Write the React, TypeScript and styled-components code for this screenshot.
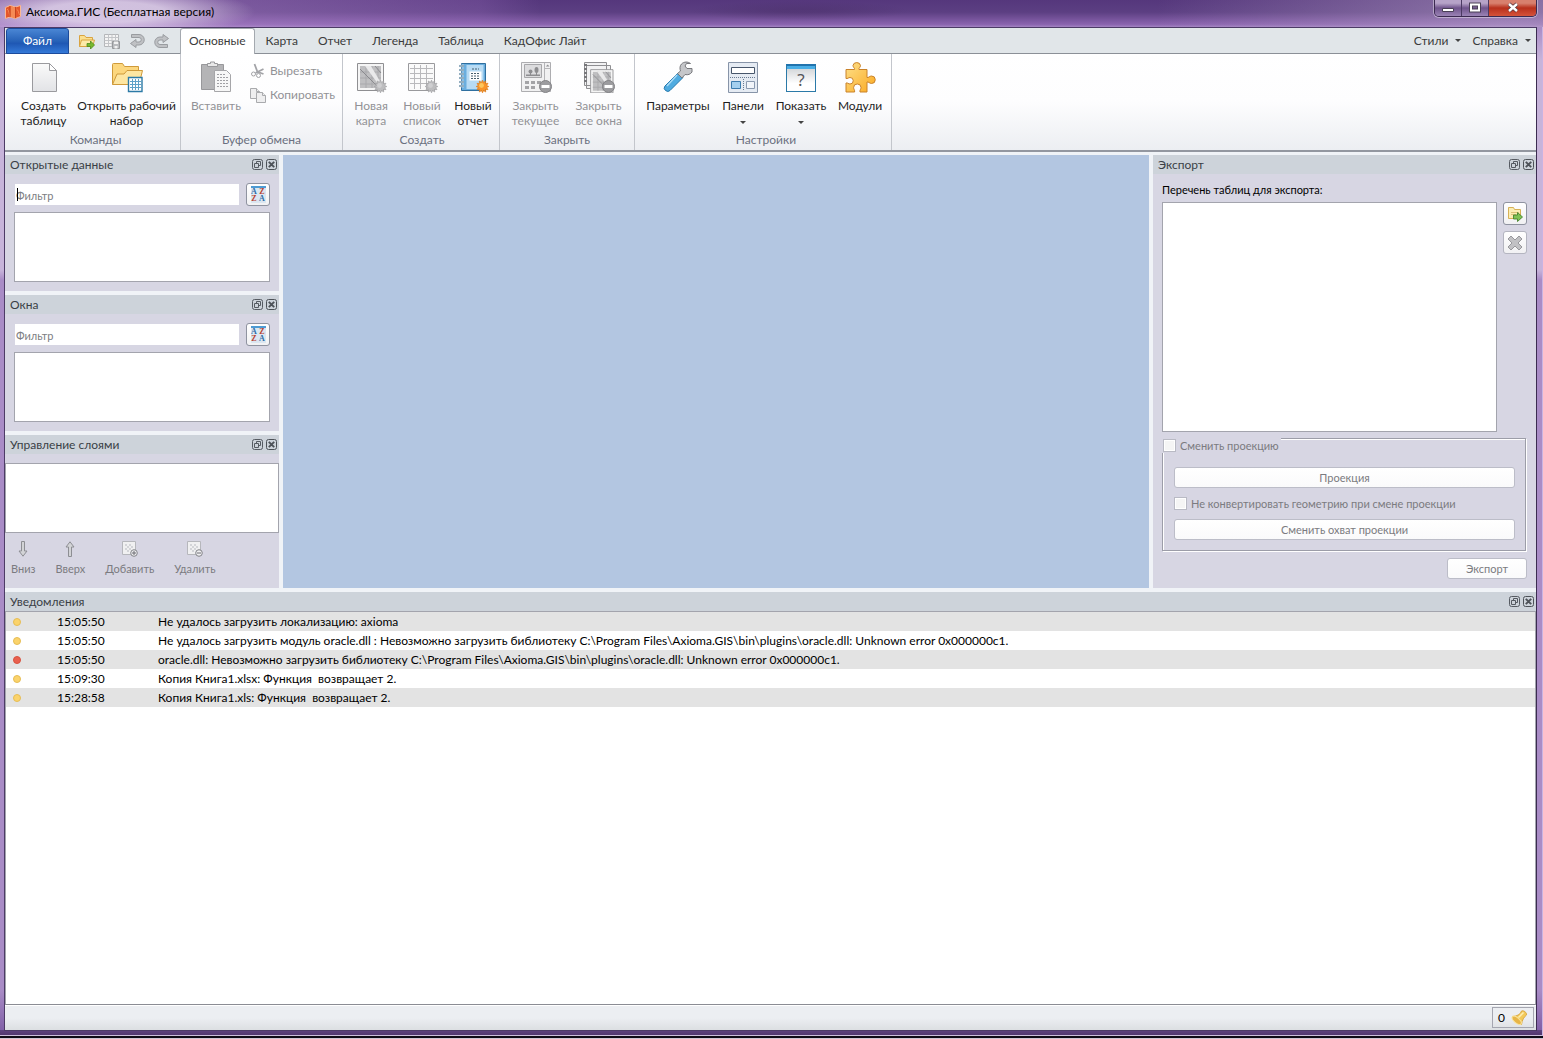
import React from 'react';
import styled, { createGlobalStyle } from 'styled-components';

const UI = 'Lato, "Noto Sans", sans-serif';

const Global = createGlobalStyle`
  * { box-sizing: border-box; }
  html, body, #root { height: 100%; }
  body { margin: 0; background: #2b1d3d; font: 12px/16px ${UI}; color: #1e1e1e; overflow: hidden; }
  button, input { font: inherit; color: inherit; margin: 0; }
  button { padding: 0; border: 0; background: none; }
  svg { display: block; flex: none; }
`;

const Desktop = styled.div`
  height: 100vh;
  display: flex;
  flex-direction: column;
  border-bottom: 1px solid #cfc3d2;
  background: #0f0a15;
  padding-bottom: 2px;
`;

const Frame = styled.main`
  flex: 1;
  min-height: 0;
  display: flex;
  flex-direction: column;
  padding: 0 5px 4px 4px;
  border-right: 1px solid #c9b4e2;
  border-bottom: 1px solid #cdbfdc;
  background:
    linear-gradient(#5f4380, #52366e) bottom / 100% 5px no-repeat,
    linear-gradient(180deg, transparent 0 27px, rgba(255,255,255,.35) 60px 270px, transparent 280px),
    linear-gradient(180deg, #a98cc6 0 990px, #7d5ba4 100%);
`;

const TitleBar = styled.header`
  height: 27px;
  margin: 0 -6px 0 -4px;
  padding: 0 6px 0 5px;
  display: flex;
  align-items: flex-start;
  background:
    radial-gradient(ellipse 150px 26px at 105px 12px, rgba(235,225,242,.75) 40%, transparent 100%),
    radial-gradient(ellipse 110px 10px at 800px 11px, rgba(60,35,85,.25) 20%, transparent 100%),
    linear-gradient(90deg, rgba(190,150,215,.5) 0, rgba(160,115,195,.25) 480px, transparent 540px, transparent 75%, rgba(190,170,205,.5) 97%),
    linear-gradient(180deg, #55377c 0, #5c3f82 45%, #8a63ae 90%, #a383c2 100%);
`;

const AppName = styled.h1`
  margin: 0;
  padding: 4px 0 0 5px;
  flex: 1;
  font-size: 12px;
  font-weight: 400;
  line-height: 16px;
  color: #000;
`;

const LogoWrap = styled.span`
  padding-top: 4px;
`;

const Caption = styled.div`
  display: flex;
  height: 17px;
  border: 1px solid #3b2a50;
  border-top: 0;
  border-radius: 0 0 5px 5px;
  overflow: hidden;
  box-shadow: 0 0 0 1px rgba(255,255,255,.4);
`;

const CaptionButton = styled.button<{ $close?: boolean }>`
  width: ${p => (p.$close ? 47 : 27)}px;
  display: flex;
  align-items: center;
  justify-content: center;
  border-right: 1px solid #4b3a63;
  background: ${p => p.$close
    ? 'linear-gradient(#d8806e 0 20%, #b8301c 50%, #d5533a)'
    : 'linear-gradient(#b6a3c8 0 20%, #6f548c 50%, #9b83b5)'};
  &:last-child { border-right: 0; }
`;

const Client = styled.div`
  flex: 1;
  min-height: 0;
  display: flex;
  flex-direction: column;
  border: 1px solid #4d3b66;
  border-right-color: #3b2c50;
  background: #f0f3f7;
`;

const TabRow = styled.nav`
  height: 26px;
  display: flex;
  align-items: stretch;
  background: #e1e6e9;
  border-bottom: 1px solid #8b9097;
`;

const FileButton = styled.button`
  width: 63px;
  margin-left: 1px;
  margin-bottom: -1px;
  color: #fff;
  border: 1px solid #1c4b9c;
  border-radius: 3px 3px 0 0;
  background: linear-gradient(#4a86d4, #2762b8 50%, #1f58b4 60%, #3479d8);
`;

const QuickAccess = styled.div`
  display: flex;
  align-items: center;
  gap: 9px;
  padding: 0 10px;
`;

const Tab = styled.button<{ $active?: boolean }>`
  padding: 0 ${p => (p.$active ? 8 : 9)}px 2px;
  margin: 0 ${p => (p.$active ? 1 : 0)}px -1px 0;
  color: #3b3b3b;
  white-space: nowrap;
  border: 1px solid ${p => (p.$active ? '#a4a9af' : 'transparent')};
  border-bottom: 0;
  border-radius: 3px 3px 0 0;
  background: ${p => (p.$active ? '#fff' : 'transparent')};
`;

const Spacer = styled.div`
  flex: 1;
`;

const MenuButton = styled.button`
  display: flex;
  align-items: center;
  gap: 7px;
  padding: 0 5px 0 6px;
  color: #3b3b3b;
`;

const Arrow = styled.span`
  border: 3px solid transparent;
  border-top-color: #444;
  border-bottom: 0;
`;

const DropArrow = styled(Arrow)`
  margin-top: 3px;
`;

const Ribbon = styled.section`
  height: 98px;
  display: flex;
  background: linear-gradient(#ffffff 0, #fdfdfe 50%, #eceef2 100%);
  border-bottom: 2px solid #9397a0;
`;

const Group = styled.div<{ $w: number; $pad?: number }>`
  width: ${p => p.$w}px;
  display: flex;
  flex-direction: column;
  border-right: 1px solid #c3c6cc;
  padding: 7px 0 1px ${p => p.$pad ?? 0}px;
`;

const GroupItems = styled.div`
  flex: 1;
  display: flex;
  justify-content: center;
  align-items: flex-start;
`;

const GroupLabel = styled.div`
  text-align: center;
  color: #6b7080;
  line-height: 18px;
`;

const BigButton = styled.button<{ $w: number }>`
  width: ${p => p.$w}px;
  display: flex;
  flex-direction: column;
  align-items: center;
  gap: 5px;
  line-height: 15px;
  white-space: pre;
  color: #1e1e1e;
  &:disabled { color: #929296; }
`;

const Stack = styled.div`
  display: flex;
  flex-direction: column;
  gap: 8px;
  padding: 2px 0 0 6px;
`;

const SmallButton = styled.button`
  display: flex;
  align-items: center;
  gap: 4px;
  &:disabled { color: #929296; }
`;

const Workspace = styled.div`
  height: 433px;
  margin-top: 3px;
  display: grid;
  grid-template-columns: 274px 1fr 383px;
  gap: 4px;
`;

const Column = styled.div`
  display: flex;
  flex-direction: column;
  gap: 4px;
`;

const Panel = styled.section<{ $fill?: boolean }>`
  display: flex;
  flex-direction: column;
  flex: ${p => (p.$fill ? 1 : 'none')};
  min-height: 0;
  background: #d7d6e3;
`;

const PanelTitle = styled.header`
  height: 19px;
  padding: 0 2px 0 5px;
  display: flex;
  align-items: center;
  gap: 3px;
  background: #cdd3da;
`;

const PanelName = styled.h2`
  margin: 0;
  flex: 1;
  font-size: 12px;
  font-weight: 400;
  line-height: 19px;
  color: #3a3f46;
`;

const PanelTool = styled.button`
  width: 11px;
  height: 11px;
`;

const Canvas = styled.section`
  background: #b3c6e1;
`;

const FilterBody = styled.div`
  display: flex;
  flex-direction: column;
  gap: 6px;
  padding: 9px 9px;
`;

const FilterRow = styled.div`
  display: flex;
  align-items: center;
  gap: 7px;
`;

const FilterField = styled.label`
  flex: 1;
  position: relative;
  display: flex;
  padding-left: 1px;
`;

const FilterInput = styled.input`
  width: 100%;
  height: 21px;
  padding: 1px 1px 0;
  border: 0;
  border-radius: 0;
  outline: 0;
  font-size: 11px;
  background: #fff;
  &::placeholder { color: #7d7d82; opacity: 1; }
`;

const Caret = styled.i`
  position: absolute;
  left: 3px;
  top: 4px;
  width: 1px;
  height: 13px;
  background: #000;
`;

const ToolButton = styled.button`
  width: 24px;
  height: 23px;
  display: flex;
  align-items: center;
  justify-content: center;
  border: 1px solid #8f93a0;
  border-radius: 3px;
  background: linear-gradient(#fff, #f1f1f3);
  &:disabled { border-color: #b4b5c0; }
`;

const ListBox = styled.div<{ $h: number }>`
  height: ${p => p.$h}px;
  background: #fff;
  border: 1px solid #a3a4ad;
`;

const LayerBody = styled.div`
  padding-top: 9px;
`;

const LayerTools = styled.div`
  display: flex;
  gap: 20px;
  padding: 8px 6px;
  font-size: 11px;
`;

const LayerButton = styled.button`
  display: flex;
  flex-direction: column;
  align-items: center;
  gap: 4px;
  &:disabled { color: #7b7b80; }
`;

const ExportBody = styled.div`
  padding: 8px 9px 0;
  font-size: 11px;
`;

const ExportLabel = styled.div`
  line-height: 16px;
  margin-bottom: 4px;
  color: #000;
`;

const ExportRow = styled.div`
  display: grid;
  grid-template-columns: 1fr 24px;
  gap: 6px;
`;

const ButtonColumn = styled.div`
  display: flex;
  flex-direction: column;
  gap: 6px;
`;

const ProjectionGroup = styled.div`
  display: flex;
  flex-direction: column;
  margin: 6px 1px 0 0;
  padding: 0 10px 10px 11px;
  border: 1px solid #9c9da8;
  box-shadow: 1px 1px 0 #fff, inset 1px 1px 0 #fff;
`;

const Check = styled.label`
  display: flex;
  align-items: center;
  gap: 4px;
  height: 15px;
  color: #7b7b80;
  white-space: nowrap;
`;

const GroupCheck = styled(Check)`
  align-self: flex-start;
  margin: -1px 0 14px -12px;
  padding: 0 2px 0 1px;
  background: #d7d6e3;
`;

const CheckBox = styled.input.attrs({ type: 'checkbox' })`
  appearance: none;
  width: 13px;
  height: 13px;
  border: 1px solid #b9bac4;
  background: #f5f5f5;
  box-shadow: inset 0 0 0 1px #fff;
`;

const PushButton = styled.button<{ $w?: number }>`
  height: 21px;
  width: ${p => (p.$w ? `${p.$w}px` : 'auto')};
  border: 1px solid #bcbdc8;
  border-radius: 3px;
  background: linear-gradient(#fff, #fafafb);
  &:disabled { color: #7b7b80; }
`;

const ProjectionOptions = styled.div`
  display: flex;
  flex-direction: column;
  gap: 8px;
`;

const ExportActions = styled.div`
  display: flex;
  justify-content: flex-end;
  margin-top: 7px;
`;

const LogPanel = styled(Panel)`
  margin-top: 4px;
`;

const LogArea = styled.div`
  flex: 1;
  min-height: 0;
  background: #fff;
  border: 1px solid #a3a4ad;
  border-bottom-color: #8b8c94;
`;

const LogTable = styled.table`
  width: 100%;
  table-layout: fixed;
  border-collapse: collapse;
  color: #000;
`;

const LogRow = styled.tr`
  height: 19px;
  &:nth-child(odd) { background: #e3e3e3; }
`;

const LogCell = styled.td<{ $w?: number }>`
  width: ${p => (p.$w ? `${p.$w}px` : 'auto')};
  padding: 0;
  line-height: 19px;
  white-space: pre;
`;

const Dot = styled.span<{ $error?: boolean }>`
  display: block;
  width: 8px;
  height: 8px;
  margin-left: 7px;
  border-radius: 50%;
  border: 1px solid ${p => (p.$error ? '#d8523f' : '#e6bd55')};
  background: ${p => (p.$error ? '#e9604e' : '#fbd36b')};
`;

const StatusBar = styled.footer`
  height: 25px;
  display: flex;
  justify-content: flex-end;
  padding: 1px 2px 2px 0;
  border-top: 1px solid #fff;
  background: linear-gradient(#eceef2 0 50%, #dcdfe2);
`;

const StatusCell = styled.div`
  display: flex;
  align-items: center;
  gap: 6px;
  padding: 0 5px;
  border: 1px solid #a5a6b0;
  color: #000;
`;

/* ---------- icons ---------- */

const Logo = () => (
  <svg width="16" height="16" viewBox="0 0 16 16">
    <path d="M.5 3.500 5 1.500l5.500 1.500 5-1.500v11l-5 2-5.500-1.500-4.500 1.500z" fill="#e5562a" stroke="#fbb992" />
    <path d="M5.500 2v11l5 1.500V3.500z" fill="#f58a55" />
    <path d="M2 5c2 1 2 5 3 7M11.500 5c2 1 2 4 3 6" stroke="#f58a55" fill="none" />
    <path d="M5 2v11M10.500 3v11" stroke="#b93a17" strokeWidth=".8" />
  </svg>
);

const FolderArrow = () => (
  <svg width="16" height="16" viewBox="0 0 16 16">
    <path d="M.5 13.500v-11h5l1.500 2h6.500v9z" fill="#fbe08f" stroke="#d9a441" />
    <path d="M.5 13.500 2.500 7h13l-2 6.500z" fill="#fdeaa8" stroke="#d9a441" />
    <path d="M8 10.500h3.500v-2.500l4 4-4 4v-2.500h-3.500z" fill="#76b82e" stroke="#4c8a1b" strokeWidth=".8" />
  </svg>
);

const TableSave = () => (
  <svg width="16" height="16" viewBox="0 0 16 16">
    <path d="M.5 1.500h14v12h-14z" fill="#f4f4f4" stroke="#b4b6b9" />
    <path d="M.5 4.500h14M.5 7.500h14M.5 10.500h14M4.500 1.500v12M8 1.500v12M11.500 1.500v12" stroke="#c3c5c8" />
    <path d="M8.500 8.500h7v7h-7z" fill="#b9bbbe" stroke="#96989b" />
    <path d="M10 8.500h4v2.500h-4zM10.500 13h3v2.500h-3z" fill="#f1f1f1" />
  </svg>
);

/* The loop opens to the left; redo mirrors it and puts the arrow head on top. */
const Undo = ({ redo }: { redo?: boolean }) => (
  <svg width="16" height="16" viewBox="0 0 16 16">
    <g transform={redo ? 'rotate(180 8 8)' : undefined}>
      <path
        d="M2.500 1.500H10a5 5 0 0 1 0 10.500H7v2.500L1.500 10.500l5.500-4v2.500h3a2 2 0 0 0 0-4.500H2.500z"
        fill="#bfc1c4" stroke="#999ca0"
      />
    </g>
  </svg>
);

const NewPage = () => (
  <svg width="32" height="32" viewBox="0 0 32 32">
    <defs>
      <linearGradient id="page" x1="0" y1="0" x2="0" y2="1"><stop stopColor="#fafafa" /><stop offset="1" stopColor="#e2e3e6" /></linearGradient>
    </defs>
    <path d="M4.500 2.500h17l7 7v21h-24z" fill="url(#page)" stroke="#9a9a9e" />
    <path d="M21.500 2.500v7h7z" fill="#fff" stroke="#9a9a9e" />
  </svg>
);

const OpenFolder = () => (
  <svg width="32" height="32" viewBox="0 0 32 32">
    <path d="M1.500 23.500V3.500q0-1 1-1h9l2 3h14v5" fill="#fcd77e" stroke="#cf9a3a" />
    <path d="M1.500 23.500 6 13h7l3-3.500h15.500L28 23.500z" fill="#fde6a2" stroke="#cf9a3a" />
    <path d="M17.500 16.500h13.500v14h-13.500z" fill="#fff" stroke="#2c7aa6" strokeWidth="1.400" />
    <path d="M19 20.500h11M19 23.500h11M19 26.500h11M21.500 18v11M24.500 18v11M27.500 18v11" stroke="#5fa2c8" />
  </svg>
);

const Paste = () => (
  <svg width="32" height="32" viewBox="0 0 32 32">
    <path d="M1.500 3.500h22v25h-22z" fill="#b4b4b6" stroke="#98989b" />
    <path d="M7.500 5.500v-3h3v-1.500h4v1.500h3v3z" fill="#e8e8e8" stroke="#98989b" />
    <path d="M14.500 9.500h12l4 4v17h-16z" fill="#f7f7f7" stroke="#a6a6a9" />
    <path d="M17 13.500h8M17 16.500h11M17 19.500h11M17 22.500h11M17 25.500h11" stroke="#a0a0a4" strokeDasharray="2 1" />
  </svg>
);

const Cut = () => (
  <svg width="16" height="16" viewBox="0 0 16 16" fill="none" stroke="#a2a3a7">
    <path d="M4.500 1 7.500 9" strokeWidth="1.800" /><path d="m13.500 6-8 4M8 9l5.500 2" strokeWidth="1.800" />
    <circle cx="3.500" cy="11" r="2" /><circle cx="8.500" cy="12.500" r="2" />
  </svg>
);

const Copy = () => (
  <svg width="16" height="16" viewBox="0 0 16 16" fill="#eeeeef" stroke="#a9aaad">
    <path d="M.5 1.500h6l3 3v7h-9z" /><path d="M6.500 1.500v3h3" />
    <path d="M6.500 5.500h6l3 3v7h-9z" /><path d="M12.500 5.500v3h3" />
  </svg>
);

const burstPoints = Array.from({ length: 24 }, (_, i) => {
  const a = (i * Math.PI) / 12;
  const r = i % 2 ? 4.2 : 6.3;
  return `${(25.5 + r * Math.cos(a)).toFixed(1)},${(25.5 + r * Math.sin(a)).toFixed(1)}`;
}).join(' ');

const Burst = ({ color, edge, light }: { color: string; edge: string; light: string }) => (
  <>
    <polygon points={burstPoints} fill={color} stroke={edge} strokeWidth=".7" />
    <circle cx="24.500" cy="24.500" r="2.400" fill={light} />
  </>
);

const GreyBurst = () => <Burst color="#bdbdbf" edge="#a0a0a3" light="#cfcfd1" />;

const MapShape = () => (
  <>
    <path d="M2.500 2.500h26v27h-26z" fill="#f5f5f5" stroke="#8f8f92" />
    <path d="M5 5h21v22H5z" fill="#bfbfc1" />
    <path d="M5 11h21M5 17h21M5 23h21M11 5v22M17 5v22M23 5v22" stroke="#a9a9ac" />
    <path d="M10 5h6l10 17v5z" fill="#e9e9ea" /><path d="m20 5 6 7M5 8l19 19" stroke="#8a8a8e" />
  </>
);

const NewMap = () => (
  <svg width="32" height="32" viewBox="0 0 32 32"><MapShape /><GreyBurst /></svg>
);

const NewList = () => (
  <svg width="32" height="32" viewBox="0 0 32 32">
    <path d="M2.500 2.500h26v27h-26z" fill="#fafafa" stroke="#9a9a9d" />
    <path d="M4 7.500h23M4 12.500h23M4 17.500h23M4 22.500h23M8.500 4v24M14.500 4v24M20.500 4v24" stroke="#b9b9bc" />
    <GreyBurst />
  </svg>
);

const NewReport = () => (
  <svg width="32" height="32" viewBox="0 0 32 32">
    <path d="M4.500 2.500h24v27h-24z" fill="#6aaede" stroke="#2f6f9f" />
    <path d="M9.500 4h17v24h-17z" fill="#b7dbf4" />
    <path d="M12.500 10.500h12v9h-12z" fill="#fff" />
    <path d="M15 8h7M14 12.500h9M14 15h9M14 17.500h9" stroke="#49606e" strokeDasharray="2 1" />
    <path d="M2 5h5M2 9h5M2 13h5M2 17h5M2 21h5M2 25h5" stroke="#e9f2f8" strokeWidth="2.400" />
    <path d="M2 5h5M2 9h5M2 13h5M2 17h5M2 21h5M2 25h5" stroke="#3f6a88" />
    <Burst color="#f9952a" edge="#dd7a18" light="#fdc65c" />
  </svg>
);

const Minus = () => (
  <>
    <circle cx="25.500" cy="25.500" r="6" fill="#9c9c9f" stroke="#828285" />
    <path d="M21.500 24h8v3h-8z" fill="#fff" />
  </>
);

const CloseCurrent = () => (
  <svg width="32" height="32" viewBox="0 0 32 32">
    <path d="M1.500 1.500h29v29h-29z" fill="#f1f1f2" stroke="#adadb0" />
    <path d="M4.500 3.500h17v13h-17z" fill="#dcdcde" stroke="#a7a7aa" />
    <path d="M6 15h14v-1.500H6z" fill="#8d8d90" />
    <path d="M10.500 9v5M16.500 8v6" stroke="#8d8d90" />
    <ellipse cx="10.500" cy="10.500" rx="2" ry="2" fill="#8d8d90" /><ellipse cx="16.500" cy="9" rx="2" ry="3" fill="#8d8d90" />
    <path d="M24.500 2v28M25 7.500h6" stroke="#b5b5b8" /><path d="m27.700 3.500 1.800 2h-3.600z" fill="#909093" />
    <path d="M5 20h4v3H5zM11 20h4v3h-4zM17 20h4v3h-4zM5 25h4v3H5zM11 25h4v3h-4z" fill="#a3a3a6" />
    <Minus />
  </svg>
);

const CloseAll = () => (
  <svg width="32" height="32" viewBox="0 0 32 32">
    <g fill="#f2f2f3" stroke="#8e8e91"><path d="M1.500 1.500h22v23h-22zM3.500 4.500h24v23h-24z" /></g>
    <g transform="translate(5.500 6.500) scale(.86)"><MapShape /></g>
    <path d="M1 4h3M1 8h3M1 12h3M1 16h3M1 20h3" stroke="#77777a" strokeWidth="2" />
    <Minus />
  </svg>
);

const Wrench = () => (
  <svg width="32" height="32" viewBox="0 0 32 32">
    <path d="M16 12 21 16.500 8 29.500q-2 2-4.500 0T3 25z" fill="#4fabe0" stroke="#2478ad" />
    <path d="m15 14-10 11" stroke="#a8daf5" strokeWidth="1.500" />
    <path d="M30 7.500h-5l-2-2.500 1.500-2.500h4C26 .5 22 .5 19.500 3 17.500 5 17.800 8 18.500 10l-3 2.500 4.500 4.500 3-3.500c3 .8 5.500-.3 7-2.500z" fill="#c5c6c9" stroke="#77787c" />
  </svg>
);

const Panels = () => (
  <svg width="32" height="32" viewBox="0 0 32 32">
    <path d="M1.500 1.500h29v30h-29z" fill="#e5ebf3" stroke="#8794a8" />
    <path d="M4.500 6.500h23v6h-23z" fill="#fff" stroke="#47566b" />
    <path d="M3 16.500h26M16.500 18v12" stroke="#6a7b92" strokeDasharray="1 1" />
    <path d="M4.500 20.500h9v7h-9z" fill="#a4d0ef" stroke="#3c7cae" /><path d="M19.500 20.500h8v7h-8z" fill="#f2f5fa" stroke="#8b9ab0" />
  </svg>
);

const WindowIcon = styled.span`
  width: 32px;
  height: 32px;
  padding: 3px 1px 1px;
`;

const WindowGlyph = styled.b`
  display: block;
  height: 28px;
  border: 1px solid #2b79a8;
  border-top: 2px solid #2173ad;
  background: linear-gradient(#49aee6 0 3px, #d5d8db 3px, #fff 70%);
  font: 17px/28px "Noto Sans", sans-serif;
  text-align: center;
  color: #55565a;
`;

const ShowIcon = () => <WindowIcon aria-hidden="true"><WindowGlyph>?</WindowGlyph></WindowIcon>;

const Puzzle = () => (
  <svg width="32" height="32" viewBox="0 0 32 32">
    <defs>
      <linearGradient id="puz" x1="0" y1="0" x2="1" y2="1"><stop stopColor="#fde08a" /><stop offset="1" stopColor="#fba91f" /></linearGradient>
    </defs>
    <path d="M2 8.500h8.500c.5-1.500-1.500-2-1.500-4a3.800 3.500 0 0 1 7.500 0c0 2-2 2.500-1.500 4H23v8c1.500.5 2.500-1.500 4.500-1.500a3.500 3.500 0 0 1 0 7.500c-2 0-3-2-4.500-1.500v10h-7c-.5-2 1-2.500 1-4.500a3.700 3.500 0 0 0-7.400 0c0 2 1.400 2.500 1 4.500H2v-9c1.500-.5 2.500 1 4 1a3.200 3.200 0 0 0 0-6.500c-1.500 0-2.500 1.500-4 1z" fill="url(#puz)" stroke="#c9822a" />
  </svg>
);

const Restore = () => (
  <svg width="11" height="11" viewBox="0 0 11 11" fill="none" stroke="#565b62">
    <rect x=".5" y=".5" width="10" height="10" rx="2" /><path d="M4.500 4V2.500h4v4H7M2.500 4.500h4v4h-4z" />
  </svg>
);

const CloseBox = () => (
  <svg width="11" height="11" viewBox="0 0 11 11" fill="none" stroke="#4d5258">
    <rect x=".5" y=".5" width="10" height="10" rx="2" /><path d="m2.800 2.800 5.400 5.400M8.200 2.800 2.800 8.200" strokeWidth="1.900" />
  </svg>
);

const SortGlyphs = styled.span`
  width: 15px;
  height: 17px;
  display: grid;
  grid-template-columns: 7px 7px;
  column-gap: 1px;
  grid-auto-rows: 7px;
  border-top: 2px solid #4d9bd3;
  background: #dbe6f0;
  font: bold 8px/8px "Liberation Serif", serif;
  text-align: center;
  color: #2d6ca8;
`;

const RedGlyph = styled.span`
  color: #b8402f;
`;

const SortIcon = () => (
  <SortGlyphs aria-hidden="true"><span>A</span><RedGlyph>Z</RedGlyph><RedGlyph>Z</RedGlyph><span>A</span></SortGlyphs>
);

const ArrowIcon = ({ up }: { up?: boolean }) => (
  <svg width="16" height="16" viewBox="0 0 16 16">
    <path d={up ? 'M6.500 15.500v-9.500h-2.500L8 .8 12 6H9.500v9.500z' : 'M6.500.5v9.500h-2.500L8 15.200 12 10H9.500V.5z'} fill="#d2d3d6" stroke="#8d8e93" />
  </svg>
);

const LayerIcon = ({ add }: { add?: boolean }) => (
  <svg width="16" height="16" viewBox="0 0 16 16">
    <path d="M.5.5h13v13H.5z" fill="#f0f0f1" stroke="#b6b7bc" />
    <path d="M3 3h2v2H3zM7 3h2v2H7zM5 5h2v2H5zM9 5h2v2H9zM3 7h2v2H3zM7 7h2v2H7zM5 9h2v2H5z" fill="#d3d4d8" />
    <circle cx="12" cy="12" r="3.300" fill="#efeff1" stroke="#828388" />
    <path d={add ? 'M10 12h4M12 10v4' : 'M10 12h4'} stroke="#6c6d72" />
  </svg>
);

const ExportAdd = () => (
  <svg width="16" height="16" viewBox="0 0 16 16">
    <path d="M1.500 12.500v-11h5l1 2h6v9z" fill="#fbeeb4" stroke="#d7b157" />
    <path d="M4 6.500h8M4 8.500h5" stroke="#dcc27a" />
    <path d="M6.500 9h4V6.500l5 4.500-5 4.500V13h-4z" fill="#7fc254" stroke="#45852c" strokeWidth=".9" />
  </svg>
);

const Remove = () => (
  <svg width="16" height="16" viewBox="0 0 16 16">
    <path d="M1 4 4 1l4 4 4-4 3 3-4 4 4 4-3 3-4-4-4 4-3-3 4-4z" fill="#c1c1c4" stroke="#98989c" />
  </svg>
);

const Bell = () => (
  <svg width="17" height="17" viewBox="0 0 17 17">
    <path d="M1 7.500C6 7.500 9.500 5 10.500 2c2-1 5.500 1.500 5 4C13 8 11 11 10.500 15.500z" fill="#f3c95a" stroke="#d9a844" />
    <ellipse cx="5.700" cy="11.300" rx="5.600" ry="2.600" transform="rotate(40 5.700 11.300)" fill="#e7b548" stroke="#f9e29a" />
    <path d="m12.500 3.500-5 5" stroke="#fdedb2" strokeWidth="1.600" />
  </svg>
);

/* ---------- parts ---------- */

const TitledHeader = ({ name }: { name: string }) => (
  <PanelTitle>
    <PanelName>{name}</PanelName>
    <PanelTool aria-label="Открепить"><Restore /></PanelTool>
    <PanelTool aria-label="Закрыть"><CloseBox /></PanelTool>
  </PanelTitle>
);

const FilterPanel = ({ name, caret }: { name: string; caret?: boolean }) => (
  <Panel>
    <TitledHeader name={name} />
    <FilterBody>
      <FilterRow>
        <FilterField>
          <FilterInput aria-label={`${name}: фильтр`} placeholder="Фильтр" />
          {caret && <Caret />}
        </FilterField>
        <ToolButton aria-label="Сортировка"><SortIcon /></ToolButton>
      </FilterRow>
      <ListBox $h={70} />
    </FilterBody>
  </Panel>
);

const tabs = ['Основные', 'Карта', 'Отчет', 'Легенда', 'Таблица', 'КадОфис Лайт'];

const log = [
  { time: '15:05:50', text: 'Не удалось загрузить локализацию: axioma' },
  { time: '15:05:50', text: 'Не удалось загрузить модуль oracle.dll : Невозможно загрузить библиотеку C:\\Program Files\\Axioma.GIS\\bin\\plugins\\oracle.dll: Unknown error 0x000000c1.' },
  { time: '15:05:50', text: 'oracle.dll: Невозможно загрузить библиотеку C:\\Program Files\\Axioma.GIS\\bin\\plugins\\oracle.dll: Unknown error 0x000000c1.', error: true },
  { time: '15:09:30', text: 'Копия Книга1.xlsx: Функция  возвращает 2.' },
  { time: '15:28:58', text: 'Копия Книга1.xls: Функция  возвращает 2.' },
];

export default function App() {
  return (
    <>
      <Global />
      <Desktop>
        <Frame>
          <TitleBar>
            <LogoWrap><Logo /></LogoWrap>
            <AppName>Аксиома.ГИС (Бесплатная версия)</AppName>
            <Caption>
              <CaptionButton aria-label="Свернуть">
                <svg width="12" height="12" viewBox="0 0 12 12"><path d="M.5 6.500h11v3H.5z" fill="#fff" stroke="#4a4057" /></svg>
              </CaptionButton>
              <CaptionButton aria-label="Развернуть">
                <svg width="12" height="12" viewBox="0 0 12 12"><path d="M2 2.500h8v6H2z" fill="none" stroke="#4a4057" strokeWidth="4" /><path d="M2 2.500h8v6H2z" fill="none" stroke="#fff" strokeWidth="2" /></svg>
              </CaptionButton>
              <CaptionButton $close aria-label="Закрыть окно">
                <svg width="12" height="12" viewBox="0 0 12 12"><path d="m2 2 8 7M10 2 2 9" stroke="#5b3a40" strokeWidth="4" /><path d="m2 2 8 7M10 2 2 9" stroke="#fff" strokeWidth="2.400" /></svg>
              </CaptionButton>
            </Caption>
          </TitleBar>
          <Client>
            <TabRow>
              <FileButton>Файл</FileButton>
              <QuickAccess>
                <FolderArrow /><TableSave /><Undo /><Undo redo />
              </QuickAccess>
              {tabs.map((t, i) => <Tab key={t} $active={i === 0}>{t}</Tab>)}
              <Spacer />
              <MenuButton>Стили<Arrow /></MenuButton>
              <MenuButton>Справка<Arrow /></MenuButton>
            </TabRow>
            <Ribbon>
              <Group $w={176} $pad={6}>
                <GroupItems>
                  <BigButton $w={62}><NewPage />{'Создать\nтаблицу'}</BigButton>
                  <BigButton $w={104}><OpenFolder />{'Открыть рабочий\nнабор'}</BigButton>
                </GroupItems>
                <GroupLabel>Команды</GroupLabel>
              </Group>
              <Group $w={162}>
                <GroupItems>
                  <BigButton $w={56} disabled><Paste />Вставить</BigButton>
                  <Stack>
                    <SmallButton disabled><Cut />Вырезать</SmallButton>
                    <SmallButton disabled><Copy />Копировать</SmallButton>
                  </Stack>
                </GroupItems>
                <GroupLabel>Буфер обмена</GroupLabel>
              </Group>
              <Group $w={157} $pad={2}>
                <GroupItems>
                  <BigButton $w={51} disabled><NewMap />{'Новая\nкарта'}</BigButton>
                  <BigButton $w={51} disabled><NewList />{'Новый\nсписок'}</BigButton>
                  <BigButton $w={51}><NewReport />{'Новый\nотчет'}</BigButton>
                </GroupItems>
                <GroupLabel>Создать</GroupLabel>
              </Group>
              <Group $w={135}>
                <GroupItems>
                  <BigButton $w={63} disabled><CloseCurrent />{'Закрыть\nтекущее'}</BigButton>
                  <BigButton $w={63} disabled><CloseAll />{'Закрыть\nвсе окна'}</BigButton>
                </GroupItems>
                <GroupLabel>Закрыть</GroupLabel>
              </Group>
              <Group $w={257} $pad={6}>
                <GroupItems>
                  <BigButton $w={72}><Wrench />Параметры</BigButton>
                  <BigButton $w={58}><Panels />Панели<DropArrow /></BigButton>
                  <BigButton $w={58}><ShowIcon />Показать<DropArrow /></BigButton>
                  <BigButton $w={60}><Puzzle />Модули</BigButton>
                </GroupItems>
                <GroupLabel>Настройки</GroupLabel>
              </Group>
            </Ribbon>
            <Workspace>
              <Column>
                <FilterPanel name="Открытые данные" caret />
                <FilterPanel name="Окна" />
                <Panel $fill>
                  <TitledHeader name="Управление слоями" />
                  <LayerBody>
                    <ListBox $h={70} />
                    <LayerTools>
                      <LayerButton disabled><ArrowIcon />Вниз</LayerButton>
                      <LayerButton disabled><ArrowIcon up />Вверх</LayerButton>
                      <LayerButton disabled><LayerIcon add />Добавить</LayerButton>
                      <LayerButton disabled><LayerIcon />Удалить</LayerButton>
                    </LayerTools>
                  </LayerBody>
                </Panel>
              </Column>
              <Canvas />
              <Panel>
                <TitledHeader name="Экспорт" />
                <ExportBody>
                  <ExportLabel>Перечень таблиц для экспорта:</ExportLabel>
                  <ExportRow>
                    <ListBox $h={230} />
                    <ButtonColumn>
                      <ToolButton aria-label="Добавить таблицу"><ExportAdd /></ToolButton>
                      <ToolButton disabled aria-label="Удалить таблицу"><Remove /></ToolButton>
                    </ButtonColumn>
                  </ExportRow>
                  <ProjectionGroup>
                    <GroupCheck><CheckBox disabled />Сменить проекцию</GroupCheck>
                    <ProjectionOptions>
                      <PushButton disabled>Проекция</PushButton>
                      <Check><CheckBox disabled />Не конвертировать геометрию при смене проекции</Check>
                      <PushButton disabled>Сменить охват проекции</PushButton>
                    </ProjectionOptions>
                  </ProjectionGroup>
                  <ExportActions><PushButton $w={80} disabled>Экспорт</PushButton></ExportActions>
                </ExportBody>
              </Panel>
            </Workspace>
            <LogPanel $fill>
              <TitledHeader name="Уведомления" />
              <LogArea>
                <LogTable>
                  <tbody>
                    {log.map((r, i) => (
                      <LogRow key={i}>
                        <LogCell $w={51}><Dot $error={r.error} /></LogCell>
                        <LogCell $w={101}>{r.time}</LogCell>
                        <LogCell>{r.text}</LogCell>
                      </LogRow>
                    ))}
                  </tbody>
                </LogTable>
              </LogArea>
            </LogPanel>
            <StatusBar>
              <StatusCell>0<Bell /></StatusCell>
            </StatusBar>
          </Client>
        </Frame>
      </Desktop>
    </>
  );
}
